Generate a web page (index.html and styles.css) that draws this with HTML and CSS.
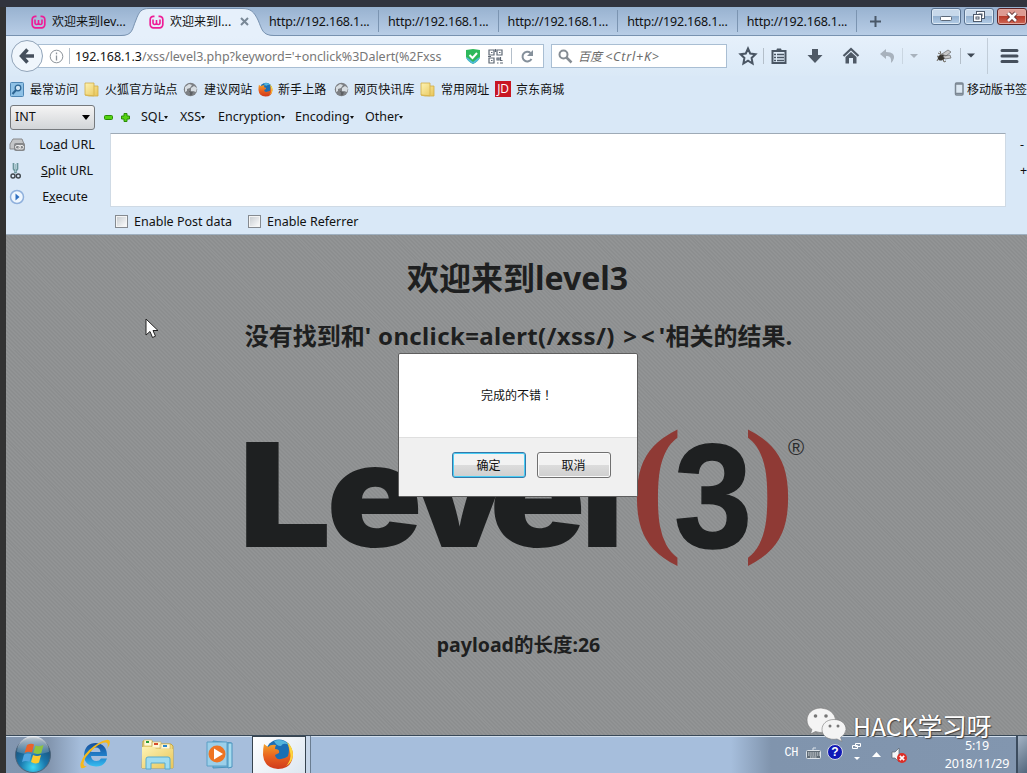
FILE: index.html
```html
<!DOCTYPE html>
<html lang="zh-CN">
<head>
<meta charset="utf-8">
<title>欢迎来到level3</title>
<link rel="stylesheet" href="styles.css">
</head>
<body>
<svg width="0" height="0" class="defs">
  <defs>
    <linearGradient id="folder" x1="0" y1="0" x2="1" y2="1"><stop offset="0" stop-color="#fdf3b4"/><stop offset="1" stop-color="#e8c558"/></linearGradient>
    <radialGradient id="orb" cx=".5" cy=".85" r=".8"><stop offset="0" stop-color="#3fd8f5"/><stop offset=".45" stop-color="#1a78ad"/><stop offset="1" stop-color="#1b4468"/></radialGradient>
    <linearGradient id="gloss" x1="0" y1="0" x2="0" y2="1"><stop offset="0" stop-color="#fff" stop-opacity=".75"/><stop offset="1" stop-color="#fff" stop-opacity=".12"/></linearGradient>
    <linearGradient id="ie" x1="0" y1="0" x2="0" y2="1"><stop offset="0" stop-color="#164f9b"/><stop offset=".6" stop-color="#2285cf"/><stop offset="1" stop-color="#35bdf0"/></linearGradient>
    <linearGradient id="fox" x1="0" y1="0" x2="0" y2="1"><stop offset="0" stop-color="#f3a12a"/><stop offset=".5" stop-color="#e9621f"/><stop offset="1" stop-color="#cf3a1c"/></linearGradient>
    <symbol id="wamp" viewBox="0 0 15 14"><path d="M5.500 1.300H4.500A3.200 3.200 0 0 0 1.200 4.500v5A3.200 3.200 0 0 0 4.500 12.800h6a3.200 3.200 0 0 0 3.300-3.300v-5A3.200 3.200 0 0 0 10.500 1.300H9.500" fill="none" stroke="#ee1c96" stroke-width="1.700"/><path d="M4 4.500v3q0 2 1.700 2t1.800-2V5v2.500q0 2 1.800 2T11 7.500v-3" fill="none" stroke="#ee1c96" stroke-width="1.600"/></symbol>
    <symbol id="folderIcon" viewBox="0 0 15 15"><path d="M1 1h9v3h4v10H5l-4-1z" fill="url(#folder)" stroke="#d0ac48" stroke-width=".8"/><path d="M10 4v9.500M1 13l9 .8" stroke="#d9b650" fill="none"/></symbol>
    <symbol id="globe" viewBox="0 0 15 15"><circle cx="7.500" cy="7.500" r="6.700" fill="#7d8084"/><path d="M2 5l4-3 3 1-2 3-3 1v2l-2 1zM8 6l3-2 3 2-1 4-3-1-2 3-2-1 2-2z" fill="#d7dde2"/><path d="M6 9l4 .5-1 3.500-2 .5z" fill="#5d6064"/></symbol>
    <symbol id="firefox" viewBox="0 0 32 32"><circle cx="17" cy="14.500" r="13" fill="#1b6fb5"/><path d="M12 3q9-3 15 4-6-3-8 1-5 0-7-5z" fill="#53b5dd"/><path d="M2 6l4 3q3-3 8-2-1 2-1 4 5 0 4 4l-4 2q1 5 6 4 5-1 9-4-5 9-12 7 9 1 10-6 2-7 0-11 5 3 5 10-1 14-15 14Q2 30 1 17 1 10 2 6z" fill="url(#fox)"/><path d="M25 4q6 5 6 13-1 8-7 11 6-6 4-14-1-6-3-10z" fill="#fcd53d"/></symbol>
  </defs>
</svg>
<div class="window">
  <header class="tabs">
    <div class="tab first"><svg class="fav"><use href="#wamp"/></svg><span>欢迎来到<i class="lat">lev...</i></span></div>
    <div class="tab active">
      <svg class="tab-shape" width="170" height="29"><path d="M0 29V28.500H3C15 28.500 14 22 18 13 21 5 23 1.500 31 1.500H124C133 1.500 136 5 140 13 144 22 144 28.500 156 28.500H170V29z" fill="#e6f0fb"/><path d="M0 28.500H3C15 28.500 14 22 18 13 21 5 23 1.500 31 1.500H124C133 1.500 136 5 140 13 144 22 144 28.500 156 28.500H170" fill="none" stroke="#7892b0"/></svg>
      <svg class="fav"><use href="#wamp"/></svg><span>欢迎来到<i class="lat">l...</i></span>
      <svg class="tab-close" width="9" height="9"><path d="M1 1l7 7M8 1L1 8" stroke="#798896" stroke-width="2"/></svg>
    </div>
    <div class="tab plain t3"><span>http://192.168.1...</span></div>
    <div class="tab plain"><span>http://192.168.1...</span></div>
    <div class="tab plain"><span>http://192.168.1...</span></div>
    <div class="tab plain"><span>http://192.168.1...</span></div>
    <div class="tab plain"><span>http://192.168.1...</span></div>
    <svg class="newtab" width="11" height="11"><path d="M5.500 0v11M0 5.500h11" stroke="#4a5868" stroke-width="2"/></svg>
    <div class="controls">
      <b class="ctl"><svg width="14" height="12"><rect x="1.500" y="5.500" width="11" height="4" rx="1" fill="#fff" stroke="#5c6878"/></svg></b>
      <b class="ctl"><svg width="14" height="13"><g fill="#fff" stroke="#4f5b6c"><rect x="4.500" y="1.500" width="8" height="7"/><rect x="7" y="4" width="3" height="2"/><rect x="1.500" y="4.500" width="8" height="7"/><rect x="4" y="7" width="3" height="2"/></g></svg></b>
      <b class="ctl close"><svg width="14" height="12"><path d="M3 2l8 8M11 2l-8 8" stroke="#5c2b2b" stroke-width="4.500"/><path d="M3 2l8 8M11 2l-8 8" stroke="#fff" stroke-width="2.600"/></svg></b>
    </div>
  </header>
  <nav class="nav">
    <div class="back"><svg width="16" height="16"><path d="M8.500 1.500L2.500 8l6 6.500M3 8h12" fill="none" stroke="#454f5c" stroke-width="3.500"/></svg></div>
    <div class="url">
      <svg class="info" width="15" height="15"><circle cx="7.500" cy="7.500" r="6.300" fill="none" stroke="#8d949b"/><path d="M7.500 6.500v5M7.500 3.500v1.700" stroke="#8d949b" stroke-width="1.300"/></svg>
      <i class="vsep"></i>
      <span class="address"><b>192.168.1.3</b>/xss/level3.php?keyword='+onclick%3Dalert(%2Fxss</span>
      <svg class="shield" width="14" height="15"><path d="M0 1l7-1 7 1v7q-1 4-7 7-6-3-7-7z" fill="#2fb85b"/><path d="M0 8q1 4 7 7 6-3 7-7l-2 1-5 4-5-4z" fill="#51b9d9"/><path d="M3.500 6l3 3 4.500-5" stroke="#fff" stroke-width="2" fill="none"/></svg>
      <svg class="qr" width="15" height="15" fill="none" stroke="#5e6874" stroke-width="1.200"><path d="M1 1h5v5H1zM9 1h5v5H9zM1 9h5v5H1zM3 3.500h1.500M11 3.500h1.500M3 11.500h1.500M9 9h2v2H9zM12.500 8v3.500h2M12 14h3M7.500 0v3M9 14h1.500M0 7.500h3"/></svg>
      <i class="vsep"></i>
      <svg class="reload" width="13" height="13"><path d="M10.500 9A4.800 4.800 0 1 1 9.500 3" fill="none" stroke="#85909b" stroke-width="2"/><path d="M12 0v6H6z" fill="#85909b"/></svg>
    </div>
    <div class="search"><svg width="15" height="15"><circle cx="5.500" cy="5.500" r="4" fill="none" stroke="#858c93" stroke-width="2"/><path d="M8.500 8.500l5 5" stroke="#858c93" stroke-width="2.500"/></svg><span>百度 <i>&lt;Ctrl+K&gt;</i></span></div>
    <div class="tools">
      <svg width="31" height="20"><path d="M16 2.500l2.200 5 5.300.7-3.900 3.700 1 5.600-4.600-2.800-4.600 2.800 1-5.600-3.900-3.700 5.300-.7z" fill="none" stroke="#4a5664" stroke-width="2"/></svg>
      <i class="vsep"></i>
      <svg width="30" height="20"><path d="M8.500 5h13v12h-13z" fill="none" stroke="#4a5664" stroke-width="2"/><path d="M12 5l1-2.500h4L18 5z" fill="#4a5664"/><path d="M10 8.500h2M13 8.500h7M10 11.500h2M13 11.500h7M10 14.500h2M13 14.500h7" stroke="#4a5664" stroke-width="1.300"/></svg>
      <svg width="42" height="20"><path d="M18 3h6v6h4.500L21 17 13.500 9H18z" fill="#4e5966"/></svg>
      <svg width="30" height="20"><path d="M7.500 10L15 3l7.500 7" stroke="#4e5966" stroke-width="2.200" fill="none"/><path d="M9.500 11L15 6l5.500 5v6.500H17V12h-4v5.500H9.500z" fill="#4e5966"/></svg>
      <svg width="36" height="20"><path d="M20 3l-6 5 6 5v-3q6-1 5 7 5-5 2-9-2-2-7-2z" fill="#a8b2bd"/></svg>
      <i class="vsep faint"></i>
      <svg width="20" height="20"><path d="M7 8h8l-4 4z" fill="#a8b2bd"/></svg>
      <svg class="bug" width="37" height="20"><ellipse cx="18.500" cy="11.500" rx="3.800" ry="2.800" fill="#36342f" transform="rotate(-18 18.500 11.500)"/><path d="M19 8l6-4 3 2-5 4zM20 10l7-1 1 3-6 1z" fill="#c9cacb" stroke="#666" stroke-width=".7"/><path d="M15 7l4 2M14 10l2 1M15 13l-1 2M20 13l1 3 2-1M18 8l-1-3" stroke="#6c675f" fill="none"/></svg>
      <i class="vsep"></i>
      <svg width="26" height="20"><path d="M6 7.500h8l-4 4z" fill="#3d4753"/></svg>
      <i class="vsep tall"></i>
      <svg width="39" height="20"><path d="M14 4.500h15M14 10h15M14 15.500h15" stroke="#454f5c" stroke-width="3" stroke-linecap="round"/></svg>
    </div>
  </nav>
  <div class="bookmarks">
    <span class="bm w74"><svg><rect x=".5" y=".5" width="13" height="14" rx="1" fill="#8ec1e6" stroke="#4e86b4"/><circle cx="8" cy="6" r="2.800" fill="#cfe6f7" stroke="#2d6593" stroke-width="1.300"/><path d="M6 8l-3.500 4" stroke="#2d6593" stroke-width="2"/></svg>最常访问</span>
    <span class="bm w99"><svg><use href="#folderIcon"/></svg>火狐官方站点</span>
    <span class="bm w75"><svg><use href="#globe"/></svg>建议网站</span>
    <span class="bm w76"><svg><use href="#firefox"/></svg>新手上路</span>
    <span class="bm w86"><svg><use href="#globe"/></svg>网页快讯库</span>
    <span class="bm w75"><svg><use href="#folderIcon"/></svg>常用网址</span>
    <span class="bm"><b class="jd">JD</b>京东商城</span>
    <span class="bm mobile"><svg class="phone"><rect x="1.500" y="1" width="7.500" height="12" rx="1" fill="#dce8f3" stroke="#7b8793" stroke-width="1.500"/><path d="M2 2h7M2 11.500h7" stroke="#7b8793" stroke-width="1.500"/></svg>移动版书签</span>
  </div>
  <section class="hackbar">
    <div class="hb-menu">
      <div class="select">INT<svg width="8" height="5"><path d="M0 0h8L4 5z"/></svg></div>
      <svg class="pm" width="9" height="9"><rect x=".5" y="2.500" width="8" height="4" rx="1" fill="#54d312" stroke="#2b8c08"/></svg>
      <svg class="pm" width="9" height="9"><path d="M3 .5h3V3h2.500v3H6v2.500H3V6H.5V3H3z" fill="#54d312" stroke="#2b8c08"/></svg>
      <span class="m1">SQL<i></i></span><span class="m2">XSS<i></i></span><span class="m3">Encryption<i></i></span><span class="m4">Encoding<i></i></span><span>Other<i></i></span>
    </div>
    <div class="hb-body">
      <div class="hb-actions">
        <div><svg width="17" height="16"><path d="M4 2h9l2 5v5H1V7z" fill="#c4c6c8" stroke="#88898b"/><rect x="5" y="6" width="11" height="8" rx="2" fill="#85878a"/><rect x="6.500" y="8.500" width="5" height="3.500" rx="1.500" fill="none" stroke="#eee"/><rect x="10" y="8.500" width="4.500" height="3.500" rx="1.500" fill="none" stroke="#eee"/></svg><span>Lo<u>a</u>d URL</span></div>
        <div><svg width="17" height="18"><path d="M4.500 1v6l3 4M8.500 1v6l-3 4" stroke="#6a959b" stroke-width="1.700" fill="none"/><path d="M6.500 2v8" stroke="#9fc0c4"/><circle cx="4" cy="14" r="2" fill="none" stroke="#40474d" stroke-width="1.400"/><circle cx="9.300" cy="14" r="2" fill="none" stroke="#40474d" stroke-width="1.400"/></svg><span><u>S</u>plit URL</span></div>
        <div><svg width="17" height="16"><circle cx="8" cy="8" r="6.500" fill="#eef6fe" stroke="#8fb0dc" stroke-width="1.500"/><path d="M6.500 4.500L10.500 8l-4 3.500z" fill="#2f6fc0"/></svg><span class="exec">E<u>x</u>ecute</span></div>
      </div>
      <div class="hb-input"></div>
      <div class="hb-size"><span>-</span><span>+</span></div>
    </div>
    <div class="hb-checks"><label><i></i>Enable Post data</label><label><i></i>Enable Referrer</label></div>
  </section>
  <main class="page">
    <h1>欢迎来到<span>level3</span></h1>
    <h2>没有找到和<span class="query">' onclick=alert(/xss/) <span class="angles">&gt;&lt;</span>'</span>相关的结果.</h2>
    <svg class="logo" width="570" height="150" viewBox="240 420 570 150">
      <g class="level"><text transform="translate(238.500 547) scale(1.140 1)">L</text><text transform="translate(326.500 547) scale(1.100 1)">e</text><text transform="translate(411 547) scale(1.060 1)">v</text><text transform="translate(489.500 547) scale(1.100 1)">e</text><text x="581" y="547">l</text></g>
      <text class="three" transform="translate(674 547) scale(.950 1)">3</text>
      <g class="paren"><text transform="translate(630 534) scale(1.010 .960)">(</text><text transform="translate(743 534) scale(1 .960)">)</text></g>
      <text class="reg" x="788" y="455">®</text>
    </svg>
    <h3><span>payload</span>的长度<span>:26</span></h3>
    <svg class="cursor" width="15" height="22"><path d="M1 1v16l4-3.500 2.500 6 3-1.300L8 12.500h5z" fill="#fff" stroke="#222"/></svg>
    <div class="dialog">
      <p>完成的不错<span class="bang" lang="zh-TW">！</span></p>
      <footer><button class="ok">确定</button><button>取消</button></footer>
    </div>
  </main>
</div>
<footer class="taskbar">
  <svg class="start" width="38" height="38"><circle cx="19" cy="19" r="17.500" fill="url(#orb)" stroke="#4d6379"/><path d="M3 16a16 16 0 0 1 32 0q-16 5-32 0z" fill="url(#gloss)"/><path d="M13 9q4-2 7-.5l-2 8q-4-1.500-7.500.5z" fill="#e9622a"/><path d="M21.500 9.500q4 1.500 8-.5l-2.200 8q-4 2-8-.2z" fill="#8cc341"/><path d="M10 18.500q4-2 7.500-.2l-2 7.500q-4-1.500-7.500.2z" fill="#4fa5e0"/><path d="M19 19q4 2 8 0l-2 7.500q-4 2-8-.5z" fill="#fbc92f"/></svg>
  <svg class="ie" width="34" height="34"><path d="M28 19H12q.5 5 5.500 5 3 0 4.500-2.500h6Q25.500 29.500 17 29.500 5 29 5 18 6 6 17 6q11 1 11 13zM12 15h9.500q-.5-4.500-4.700-4.500T12 15z" fill="url(#ie)"/><path d="M8 29Q1 34.500 1.500 27 4 17 15 9 30-1 31 5q0 3-3 7 2-6-1-6.500-4-.5-11 5Q4 21 4.500 27q.5 3 3.500 2z" fill="#f5b91d"/></svg>
  <svg class="explorer" width="34" height="32"><path d="M2 2h9l2 3h17l2 2v22H1z" fill="#efd77c" stroke="#c3a544"/><path d="M3 1h8v6H3zM11 3h9v6h-9zM19 5h10v5H19z" fill="#fff8d7" stroke="#c9b25b" stroke-width=".6"/><path d="M5 2h3v2H5z" fill="#2a9c39"/><path d="M13 4h4v2h-4z" fill="#d54b2a"/><path d="M22 6h4v2h-4z" fill="#2886ce"/><path d="M1 8h12l2 2h17v19H1z" fill="url(#folder)"/><path d="M5 30V20q0-2 2-2h20q2 0 2 2v10h-5v-6H10v6z" fill="#9fdcf1" stroke="#56abcf"/></svg>
  <svg class="player" width="32" height="29"><path d="M7 1l18 2v24L7 28z" fill="#6db4d9" stroke="#4b93bd"/><path d="M22 3h4v24l-4 1z" fill="#a6dcef" stroke="#4b93bd"/><path d="M1 2h20v24H1z" fill="#9bcfe9" stroke="#5d9fc5"/><circle cx="11" cy="14" r="8.500" fill="#ee7423"/><path d="M8 8.500l9 5.500-9 5.500z" fill="#fff"/></svg>
  <div class="task"><svg width="32" height="32"><use href="#firefox"/></svg></div><i class="task-edge"></i>
  <div class="tray">
    <span class="ch">CH</span>
    <svg class="kbd" width="16" height="12"><path d="M7 4V1h3" stroke="#dbe2e8" fill="none"/><rect x=".5" y="3.500" width="14" height="8" rx="1" fill="#5f6b75" stroke="#dbe2e8"/><path d="M2 6h12M2 8h12M4 10h7" stroke="#e3e8ec" stroke-dasharray="1.500 .7"/></svg>
    <span class="help">?</span>
    <svg class="mini" width="9" height="20"><path d="M3.500 1.500h5v3h-5zM.5 3.500h5v3h-5z" fill="#8495ab" stroke="#fff"/><path d="M2 15h6l-3 3z" fill="#fff"/></svg>
    <svg class="up" width="9" height="5"><path d="M0 5h9L4.500 0z" fill="#fff"/></svg>
    <svg class="sound" width="17" height="17"><path d="M1 5h3l4-4v14l-4-4H1z" fill="#f4f6f8" stroke="#59636d" stroke-width=".7"/><circle cx="11" cy="11" r="5" fill="#dc2e27"/><path d="M8.800 8.800l4.400 4.400M13.200 8.800l-4.400 4.400" stroke="#fff" stroke-width="1.700"/></svg>
    <time><span>5:19</span><span>2018/11/29</span></time>
    <i class="desktop"></i>
  </div>
  <div class="watermark"><svg width="42" height="36"><g fill="#f4f4f4" stroke="#777" stroke-width=".6"><path d="M15 1C6 1 1 7 1 13q0 6 5 9.500L4.500 27l5-2.500q4 1.500 9 .7L30 14Q28 2 15 1z"/><path d="M28 12.500c-8 0-12 5-12 10 0 7 7 11 15 9.500l5 2.500-1.500-4q5-3 5.500-8c0-6-5-10-12-10z"/></g><g fill="#777"><circle cx="9.500" cy="9" r="1.800"/><circle cx="20" cy="9" r="1.800"/><circle cx="24" cy="19" r="1.500"/><circle cx="32" cy="19" r="1.500"/></g></svg><span>HACK学习呀</span></div>
</footer>
</body>
</html>
```
FILE: styles.css
```css
* { box-sizing: border-box; }
body { margin: 0; width: 1027px; height: 773px; overflow: hidden; padding: 7px 0 0 6px; background: linear-gradient(#31343e 7px, #323232 7px); font: 12.5px/18px "Noto Sans", "Noto Sans CJK SC", sans-serif; color: #111; }
svg { display: block; flex: none; }
.defs { position: absolute; }
i { font-style: normal; }
span { white-space: nowrap; }
.window { background: #d9e8f7; height: 728px; display: flex; flex-direction: column; }

.tabs { height: 29px; flex: none; display: flex; align-items: center; background: linear-gradient(#98b2d0, #b8cde6); border-bottom: 1px solid #7892b0; }
.tab { height: 29px; display: flex; align-items: center; font-size: 12px; flex: none; }
.tab span { padding-top: 1px; }
.fav { width: 15px; height: 14px; margin: 1px 6px 0 0; }
.first { width: 119px; padding-left: 25px; }
.active { width: 143px; padding-left: 24px; position: relative; }
.active > * { position: relative; }
.active .tab-shape { position: absolute; left: -7px; top: 0; }
.lat { font-size: 12.5px; }
.tab-close { margin-left: 9px; }
.plain { width: 119.600px; padding-left: 9px; height: 22px; border-right: 1px solid #7b94b1; letter-spacing: -.18px; font-size: 12.5px; }
.plain.t3 { width: 111px; padding-left: 1px; }
.newtab { margin-left: 13px; }
.controls { margin-left: auto; display: flex; gap: 3px; align-self: flex-start; margin-top: 1px; }
.ctl { width: 30px; height: 17px; border: 1px solid #5a7391; border-radius: 3px; display: flex; align-items: center; justify-content: center; background: linear-gradient(#c7d8ea 45%, #94b1d0 50%, #b4cde7); box-shadow: inset 0 0 0 1px #dce9f5; }
.close { background: linear-gradient(#dd9a91 45%, #b83a29 50%, #cf6655); border-color: #5e2425; box-shadow: inset 0 0 0 1px #e4aaa2; }

.nav { height: 40px; flex: none; display: flex; align-items: center; background: linear-gradient(#e6f0fb, #dae9f7); }
.back { width: 32px; height: 32px; margin-left: 5px; border: 1px solid #91a4b9; border-radius: 50%; background: #f0f6fc; display: flex; align-items: center; justify-content: center; flex: none; position: relative; }
.url, .search { height: 24px; background: #fff; border: 1px solid #a9bed3; display: flex; align-items: center; flex: none; }
.url { width: 506px; margin-left: -5px; padding-left: 11px; border-left: 0; }
.vsep { width: 1px; height: 16px; background: #b4bfca; flex: none; }
.info { margin-right: 5px; }
.address { width: 390px; padding: 1px 0 0 5px; color: #777; font-size: 12.500px; letter-spacing: -.03px; }
.address b { font-weight: 400; color: #111; }
.shield { margin-left: 6px; }
.qr { margin: 0 8px 0 8px; }
.reload { margin-left: 9px; }
.search { width: 176px; margin-left: 7px; padding-left: 6px; gap: 5px; color: #6d6d6d; font-size: 12px; }
.search span { font-style: italic; padding-top: 1px; }
.search i { font-style: italic; font-size: 12.500px; letter-spacing: .8px; }
.tools { display: flex; align-items: center; margin-left: 5px; }
.faint { opacity: .5; }
.tall { height: 36px; opacity: .7; }

.bookmarks { height: 27px; flex: none; display: flex; align-items: center; padding: 0 0 1px 4px; font-family: "Noto Sans CJK SC", sans-serif; font-size: 12px; letter-spacing: .1px; }
.bm { display: flex; align-items: center; gap: 5px; flex: none; }
.bm svg { width: 15px; height: 15px; }
.w74 { width: 74px; } .w75 { width: 75px; } .w76 { width: 76px; } .w86 { width: 86px; }
.w99 { width: 99px; gap: 6px; }
.w75 { gap: 6px; }
.jd { width: 16px; height: 16px; background: #c81623; color: #fff; font: 12px/16px "Open Sans", sans-serif; text-align: center; letter-spacing: -.3px; }
.mobile { margin-left: auto; width: 73px; gap: 2px; letter-spacing: 0; }
.bm .phone { width: 11px; height: 14px; }

.hackbar { height: 132px; flex: none; border-bottom: 1px solid #9fb0c0; }
.hb-menu { height: 30px; display: flex; align-items: center; padding: 0 0 2px 4px; }
.select { width: 85px; height: 25px; border: 1px solid #75797d; border-radius: 3px; background: linear-gradient(#f4f4f4, #d2d5d8); display: flex; align-items: center; justify-content: space-between; padding: 0 4px; margin-right: 9px; }
.pm { margin-right: 8px; }
.hb-menu span { display: flex; align-items: center; flex: none; }
.hb-menu span i { border: 2px solid transparent; border-top: 3px solid #111; border-bottom: 0; }
.m1 { width: 39px; margin-left: 3px; } .m2 { width: 38px; } .m3 { width: 77px; } .m4 { width: 70px; }
.hb-body { display: flex; height: 74px; }
.hb-actions { width: 104px; }
.hb-actions div { height: 26px; display: flex; align-items: center; padding: 0 0 2px 3px; }
.hb-actions div span { width: 82px; text-align: center; }
.hb-actions .exec { padding-right: 4px; }
.hb-input { width: 896px; height: 74px; background: #fff; border: 1px solid #cfdae5; border-top-color: #9eaab6; }
.hb-size { width: 21px; padding-left: 14px; display: grid; grid-template-rows: 26px 26px; line-height: 24px; }
.hb-checks { height: 27px; display: flex; align-items: center; padding: 2px 0 0 109px; gap: 16px; }
.hb-checks label { display: flex; gap: 6px; align-items: center; }
.hb-checks i { width: 13px; height: 13px; border: 1px solid #858a90; background: linear-gradient(135deg, #c4c9ce, #fff); box-shadow: inset 0 0 0 1px #f4f4f4; }

.page { flex: 1; position: relative; background: repeating-linear-gradient(45deg, #8c8e8f 0 1.400px, #929495 1.400px 2.800px); display: flex; flex-direction: column; align-items: center; padding-left: 2px; color: #1e1f20; }
h1, h2, h3 { margin: 0; font-family: "Noto Sans", "Noto Sans CJK SC", sans-serif; white-space: nowrap; font-weight: 700; }
h1 { font-size: 32px; line-height: 40px; margin-top: 23px; }
h2 { font-size: 24px; line-height: 32px; margin-top: 22px; padding-left: 2px; }
.query { letter-spacing: .36px; }
.angles { letter-spacing: 4px; margin-left: 2px; }
.logo { margin: 68px 0 0 15px; }
.level { font: 900 144px "Inter", sans-serif; fill: #1e2021; }
.three { font: 700 148px "Liberation Sans", sans-serif; fill: #1e2021; stroke: #1e2021; stroke-width: 1.500px; }
.paren { font: 700 156px "Liberation Serif", serif; fill: #8f3a35; }
.reg { font: 22px "Liberation Sans", sans-serif; fill: #2a2b2c; }
h3 { font-size: 19.500px; line-height: 26px; margin-top: 62px; padding-left: 2px; }
.cursor { position: absolute; left: 139px; top: 83px; }
.dialog { position: absolute; left: 392px; top: 118px; width: 240px; height: 144px; border: 1px solid #5e5e5e; border-radius: 2px; background: #fff; display: flex; flex-direction: column; color: #111; }
.dialog p { margin: 0; height: 83px; text-align: center; padding-right: 2px; font: 12px/82px "Noto Sans CJK SC", sans-serif; }
.bang { font-family: "Noto Sans CJK TC", sans-serif; }
.dialog footer { flex: 1; background: #f0f0f0; border-top: 1px solid #dfdfdf; display: flex; gap: 11px; padding: 14px 0 0 53px; }
button { width: 74px; height: 26px; border: 1px solid #707070; border-radius: 3px; background: linear-gradient(#f2f2f2 48%, #dcdcdc 50%, #cfcfcf); font: 12px "Noto Sans CJK SC", sans-serif; box-shadow: inset 0 0 0 1px #fafafa; padding: 0 1px 1px 0; color: #111; }
.ok { border-color: #3678a8; box-shadow: inset 0 0 0 1px #48cdf5; }

.taskbar { height: 38px; position: relative; display: flex; align-items: center; border-top: 1px solid #394958; box-shadow: inset 0 1px #d2dfed; background: linear-gradient(90deg, #8296b0 0, #8194ad 42px, #a6bedc 75px, #a6bedc 725px, #8094ad 765px, #8296af); }
.start { margin-left: 8px; }
.ie { margin: 0 0 2px 27px; }
.explorer { margin-left: 28px; }
.player { margin-left: 31px; }
.task { width: 54px; height: 38px; margin-left: 14px; border: 1px solid #37444f; border-bottom: 0; background: linear-gradient(135deg, #fff, #dce6f0); display: flex; align-items: center; justify-content: center; padding: 0 2px 2px 0; }
.task-edge { width: 5px; height: 37px; border-right: 1px solid #6a7d91; background: #c7d6e8; }
.tray { margin-left: auto; display: flex; align-items: center; height: 38px; color: #fff; }
.ch { font: 12px "Liberation Mono", monospace; letter-spacing: -.5px; margin: 0 8px 3px 0; }
.kbd { margin: 0 5px 4px 0; }
.help { width: 16px; height: 16px; border-radius: 50%; background: #1019b6; border: 1px solid #d5dae2; font: 700 12px/14px "Liberation Sans", sans-serif; text-align: center; margin: 0 9px 5px 0; }
.mini { margin: 0 11px 6px 0; }
.up { margin: 0 10px 0 0; }
.sound { margin: 1px 34px 0 0; }
time { width: 70px; display: flex; flex-direction: column; align-items: center; font-size: 12.500px; line-height: 18px; margin-right: 4px; letter-spacing: -.2px; }
.desktop { width: 11px; height: 37px; border-left: 2px solid #3c4c5e; background: linear-gradient(135deg, #a5b3c4, #53677d); }
.watermark { position: absolute; left: 800px; top: -29px; display: flex; gap: 5px; color: #fff; text-shadow: 1px 1px 1px #444, -1px 0 1px #777; font: 24.700px/36px "Noto Sans CJK SC", sans-serif; }
```
